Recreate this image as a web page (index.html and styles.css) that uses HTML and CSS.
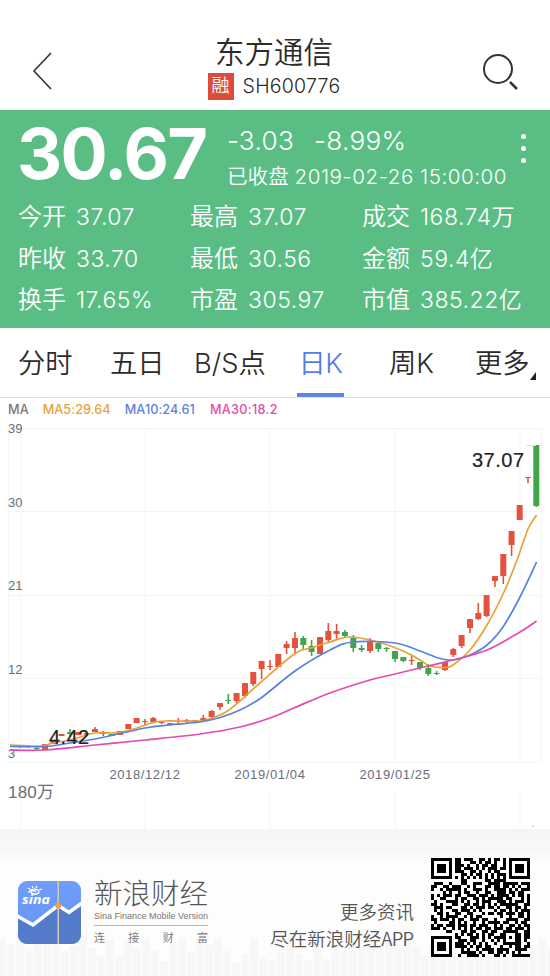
FILE: index.html
```html
<!DOCTYPE html>
<html lang="zh-CN">
<head>
<meta charset="utf-8">
<title>东方通信 SH600776</title>
<link rel="stylesheet" href="styles.css">
</head>
<body>
<header class="topbar">
  <svg class="back" viewBox="0 0 24 40"><path d="M19 2 2 20l17 18"/></svg>
  <div class="heading">
    <h1>东方通信</h1>
    <div class="code"><span class="tag">融</span><span>SH600776</span></div>
  </div>
  <svg class="search" viewBox="0 0 40 40"><circle cx="16" cy="18" r="14"/><path class="handle" d="m28 31 7 7"/></svg>
</header>

<section class="quote">
  <div class="summary">
    <div class="price">30.67</div>
    <div class="change">
      <div class="delta"><span>-3.03</span><span>-8.99%</span></div>
      <div class="status">已收盘 <span>2019-02-26 15:00:00</span></div>
    </div>
    <div class="dots"><i></i><i></i><i></i></div>
  </div>
  <div class="stats">
    <div><b>今开</b>37.07</div><div><b>最高</b>37.07</div><div><b>成交</b>168.74万</div>
    <div><b>昨收</b>33.70</div><div><b>最低</b>30.56</div><div><b>金额</b>59.4亿</div>
    <div><b>换手</b>17.65%</div><div><b>市盈</b>305.97</div><div><b>市值</b>385.22亿</div>
  </div>
</section>

<nav class="tabs">
  <span>分时</span><span>五日</span><span>B/S点</span><span class="active">日K</span><span>周K</span><span class="more">更多</span>
</nav>

<div class="legend"><span>MA</span><span class="ma5">MA5:29.64</span><span class="ma10">MA10:24.61</span><span class="ma30">MA30:18.2</span></div>

<svg class="chart" viewBox="0 420 550 409">
  <path class="grid" d="M8 428.5H541M8 511.5H541M8 595.5H541M8 678.5H541M8 762H541M8.5 428V762M541.5 428V762M20.500 428V762M145 428V762M270 428V762M395 428V762M520 428V762M20.500 792V829M145 792V829M270 792V829M395 792V829M520 792V829"/>
  <g class="axis">
    <text x="8" y="433">39</text><text x="8" y="507">30</text><text x="8" y="590">21</text><text x="8" y="674">12</text><text x="8" y="758">3</text>
    <text x="145" y="779" class="date">2018/12/12</text><text x="270" y="779" class="date">2019/01/04</text><text x="395" y="779" class="date">2019/01/25</text>
    <text x="8" y="798" class="vol">180万</text>
  </g>
  <g id="candles"></g>
  <g id="averages"></g>
  <path class="peak" d="M526 445.500H536"/>
  <text class="mark" x="472" y="467" textLength="52">37.07</text>
  <text class="mark" x="49" y="744" textLength="40">4.42</text>
  <path class="speck" d="M533 825v2"/>
</svg>

<footer class="promo">
  <svg class="skyline" id="skyline" viewBox="0 0 550 76"></svg>
  <svg class="logo" viewBox="0 0 64 64">
    <defs><linearGradient id="sky" x2="0" y2="1"><stop stop-color="#6f9df9"/><stop offset="1" stop-color="#6594f3"/></linearGradient><clipPath id="tile"><rect width="63" height="63" rx="9"/></clipPath></defs>
    <g clip-path="url(#tile)">
      <path fill="url(#sky)" d="M0 0h64v64H0z"/>
      <path fill="#537bca" d="M0 37 15 46 40 25 51 32 64 23V64H0z"/>
      <path fill="none" stroke="#fff" stroke-width="3.500" d="M-1 35 15 44 40 24.500 51 31.500 64 22"/>
      <path stroke="#d9c9b7" stroke-width="1.500" d="M40.200 0V64"/>
      <circle cx="40.200" cy="24.500" r="3" fill="#f49b43"/>
      <g fill="none" stroke="#fff" stroke-width="1.300"><path d="M11 12c0-5 9-5 10-1-1 3-7 3-8 0 1-2 4-2 5 0"/><path d="m12 8-2-1m5 0-1-2m4 2 1-2m2 4 3-1"/></g>
      <text class="sina" x="4" y="22.500" textLength="28" lengthAdjust="spacingAndGlyphs">sina</text>
    </g>
  </svg>
  <div class="brand">
    <div class="name">新浪财经</div>
    <div class="english">Sina Finance Mobile Version</div>
    <div class="slogan"><span>连</span><span>接</span><span>财</span><span>富</span></div>
  </div>
  <div class="invite">更多资讯<br>尽在新浪财经<span>APP</span></div>
  <svg class="qr" viewBox="0 0 33 33" shape-rendering="crispEdges"><path id="modules"/></svg>
</footer>
<script src="chart.js"></script>
</body>
</html>
```
FILE: styles.css
```css
* { box-sizing: border-box; }
body { margin: 0; width: 550px; height: 976px; overflow: hidden; background: #fff; color: #2b2b2b; font-family: Inter, "Noto Sans CJK SC", sans-serif; font-weight: 350; }
svg { display: block; }

.topbar { height: 110px; display: flex; justify-content: space-between; padding: 0 29px 0 32px; }
.back { width: 24px; height: 40px; margin-top: 51px; fill: none; stroke: #333; stroke-width: 1.6; }
.search { width: 40px; height: 40px; margin-top: 51px; margin-right: -1px; fill: none; stroke: #333; stroke-width: 2; }
.search .handle { stroke-width: 2.500; }
.heading { margin-left: 10px; padding-top: 33px; text-align: center; }
h1 { margin: 0; font-size: 29.5px; line-height: 39px; font-weight: 350; }
.code { display: flex; align-items: center; gap: 9px; height: 28px; font-size: 19.500px; letter-spacing: .25px; }
.tag { width: 26px; height: 27px; background: #db4c3b; color: #fff; font-size: 18px; line-height: 26px; }

.quote { height: 218px; background: #5abe84; color: #fff; padding: 0 0 0 18px; }
.summary { height: 86px; display: flex; }
.price { width: 209px; font-size: 70px; line-height: 87px; font-weight: 700; letter-spacing: -1.700px; margin-left: -1px; margin-right: 1px; }
.change { width: 285px; padding-top: 13px; }
.delta { display: flex; gap: 20px; font-size: 26.200px; line-height: 35px; letter-spacing: .3px; }
.status { font-size: 20.6px; line-height: 37px; white-space: nowrap; }
.status span { letter-spacing: .5px; }
.dots { display: flex; flex-direction: column; gap: 7px; padding: 24px 0 0 9px; }
.dots i { width: 5px; height: 5px; border-radius: 50%; background: #fff; }
.stats { display: grid; grid-template-columns: 172px 172px 188px; grid-auto-rows: 41.500px; font-size: 23px; line-height: 42px; letter-spacing: .5px; white-space: nowrap; }
.stats b { font-weight: 350; font-size: 24px; letter-spacing: 0; margin-right: 10px; }

.tabs { height: 70px; display: grid; grid-template: 69px / 92px 84px 103px 92px 86px 57px; border-bottom: 1px solid #dfe1e5; font-size: 27.300px; line-height: 71px; padding-left: 18px; white-space: nowrap; }
.tabs .active { width: 47px; height: 69px; text-align: center; color: #527ee8; border-bottom: 4px solid #5c86e5; letter-spacing: -.5px; }
.tabs .more { position: relative; }
.more::after { content: ""; position: absolute; right: -4px; top: 44px; border-left: 6px solid transparent; border-bottom: 8px solid #222; }

.legend { height: 22px; display: flex; gap: 14px; padding-left: 8px; font: 500 12.700px/23px Inter, sans-serif; letter-spacing: .05px; color: #777; }
.ma5 { color: #e9a238; }
.ma10 { color: #5b82dd; }
.ma30 { color: #e64cab; margin-left: 1px; letter-spacing: .3px; }

.chart { width: 550px; height: 409px; }
.grid { stroke: #f4f4f5; fill: none; }
.axis { fill: #696d7c; font: 13px "Liberation Sans", sans-serif; }
.date { text-anchor: middle; letter-spacing: .6px; }
.vol { font: 17px "Liberation Sans", "Noto Sans CJK SC", sans-serif; letter-spacing: .2px; }
.mark { font: 20px "Liberation Sans", sans-serif; fill: #222; stroke: #222; stroke-width: .2; }
.peak { stroke: #ddd; }
.speck { stroke: #bbb; }
.line { fill: none; stroke-width: 1.700; }

.promo { position: relative; height: 147px; display: flex; background: linear-gradient(#f5f5f5, #f8f8f8 22px, #fdfdfd 32px, #fdfdfd); padding-left: 18px; }
.promo > * { position: relative; }
.promo .skyline { position: absolute; left: 0; bottom: 0; width: 550px; height: 76px; }
.logo { width: 64px; height: 64px; margin-top: 52px; }
.sina { font: italic bold 13px "Open Sans", sans-serif; fill: #fff; }
.brand { width: 114px; margin: 44px 0 0 12px; color: #555; }
.name { font-size: 28.500px; line-height: 42px; font-weight: 300; white-space: nowrap; }
.english { height: 11px; font: 9px/2px "Liberation Sans", sans-serif; white-space: nowrap; color: #777; border-bottom: 1px solid #bbb; }
.slogan { display: flex; justify-content: space-between; font-size: 11px; line-height: 25px; color: #777; }
.invite { width: 170px; margin: 69px 0 0 36px; text-align: right; font: 350 18.500px/27px "Noto Sans CJK SC", sans-serif; color: #555; white-space: nowrap; }
.invite span { letter-spacing: -.8px; margin-right: .8px; }
.qr { width: 99px; height: 99px; margin: 29px 0 0 17px; background: #fff; }
```
FILE: chart.js
```js
// x, wick top, wick bottom, body top, body bottom, rising
const candles = [
  [20,745,748,746,747,0],[28.500,745,748,746,747,0],[36.700,747,750,748,749,0],[45,744,750,744,750,1],[53.300,740,744,740,744,1],[61.600,734,736,734,736,1],[70,729,737,732,734,0],[78.500,732,735,732,735,1],[87,733,736,733,735,1],
  [95,727,732,729,732,1],[103.300,731,736,732,734,1],[111.600,734,736,734,736,0],[120,731,735,731,735,1],[128.300,724,729,724,729,1],[136.600,718,723,718,723,1],[145,719,725,721,722,1],[153.300,717,722,718,722,1],[161.600,721,724,722,723,1],[170,723,725,723,725,1],[178.300,718,725,721,722,1],
  [186.700,719,724,720,722,1],[195,720,722,720,722,1],[203.300,715,721,718,721,1],[211.600,710,718,711,717,1],[220,703,710,703,707,1],[228.300,694,704,700,701,0],[236.600,693,703,693,701,1],[245,683,698,683,696,1],[253.300,672,686,672,684,1],[261.600,661,679,661,669,1],[270,660,670,666,667,1],[278.300,654,667,654,667,1],[286.600,641,654,644,648,1],[295,632,653,638,648,1],[303.300,636,649,638,645,0],[311.600,640,656,646,652,0],[320,637,654,637,654,1],[328.300,623,642,631,640,1],[336.600,624,639,631,634,1],[345,630,637,632,636,0],[353.300,635,652,638,648,0],
  [361.600,645,652,648,650,0],[370,638,653,641,651,1],[378.300,643,652,643,649,0],[386.600,647,652,648,649,0],[395,651,662,651,659,0],[403.300,657,662,657,661,0],[411.600,656,665,660,661,1],[420,662,670,662,668,0],[428.300,664,676,668,674,0],[436.600,671,675,673,674,0],[445,662,671,662,670,1],[453.300,648,657,649,655,1],[461.600,635,648,635,646,1],[470,619,633,619,628,1],[478.300,603,620,613,619,1],[486.600,595,617,595,616,1],[495,576,587,576,581,1],[503.300,554,584,554,576,1],[511.600,531,556,531,545,1],[519.700,505,520,505,520,1],[528,477,483,477,478,1],[536.300,445,507,445,506,0]
];
document.getElementById("candles").innerHTML = candles.map(([x, t, b, o, c, up]) => {
  const color = up ? "#e4513d" : "#43a54a";
  return `<path stroke="${color}" stroke-width="1.600" d="M${x} ${t}V${b}"/><rect x="${x - 3}" y="${o}" width="6" height="${c - o}" rx=".5" fill="${color}"/>`;
}).join("");

const averages = {
  "#eaa035": [[10,745],[40,746],[53,743],[70,740],[95,733],[112,733],[122,732],[137,728],[153,722.500],[165,721],[200,721],[212,718],[226,712],[240,701],[261,682],[295,653.500],[311,648],[330,642],[350,637],[378,642],[403,651],[420,660],[430,666],[445,667.500],[453,665],[470,650],[487,625],[504,592],[517,560],[528,529],[536.600,515]],
  "#5682e2": [[10,746.500],[45,746.500],[70,743],[100,738],[145,728],[170,725],[200,722],[220,717.500],[240,710],[261,698],[295,671],[330,650],[353,642],[395,643],[420,651],[440,658.500],[453,660],[470,655],[487,645],[503,627],[520,597],[536.600,562]],
  "#e64ab0": [[10,750],[45,750],[95,745],[145,740],[200,734],[240,727],[270,718],[295,707.500],[330,693],[370,680],[395,674],[428,666],[453,660],[487,650],[520,632],[536.600,621]]
};
// Catmull-Rom spline through the average points
function curve(p) {
  let d = `M${p[0]}`;
  for (let i = 0; i < p.length - 1; i++) {
    const a = p[i - 1] || p[i], b = p[i], c = p[i + 1], e = p[i + 2] || c;
    d += `C${b[0] + (c[0] - a[0]) / 6} ${b[1] + (c[1] - a[1]) / 6} ${c[0] - (e[0] - b[0]) / 6} ${c[1] - (e[1] - b[1]) / 6} ${c}`;
  }
  return d;
}
document.getElementById("averages").innerHTML = Object.entries(averages).map(([color, p]) => `<path class="line" stroke="${color}" d="${curve(p)}"/>`).join("");

const heights = [36,32,43,25,33,38,39,25,30,41,28,20,36,20,34,28,36,26,15,33,37,24,42,31,37,27,13,22,36,18,15,24,39,22,16,32,17,29,24,33,29,34,30,34,28,38,30,20,33,25,31,35,23,38,30,42,33,37,26,32,36,29,35];
document.getElementById("skyline").innerHTML = heights.map((h, i) => `<rect x="${i * 9 - 2}" y="${76 - h}" width="8" height="${h}" fill="#f7f7f7"/>`).join("");

const rows = [
  "#######.##.###..##.#.##.#.#######",
  "#.....#.##...##.#.##.#..#.#.....#",
  "#.###.#.###.#..#.##.##..#.#.###.#",
  "#.###.#.##.###.#.#.###.##.#.###.#",
  "#.###.#.###..##.#..#.##...#.###.#",
  "#.....#...##.#.##.#.#.###.#.....#",
  "#######.#.#.#.#.#.#.#.#.#.#######",
  "..........##......##.####........",
  ".###..#...##..###..####.#####.###",
  "##..##.###..#.#...##.##.##.#.#..#",
  "#..#.#####.#..###.#..####.#.#.###",
  "....#.#..#.##..#..##..###.##.##..",
  "#.#.###.##..###.###.#.####.#.##.#",
  "#..##...#.##..##.#.#####.##...#.#",
  ".#...####.#.#..#.###..###.#.###.#",
  "##.#...##..##.##.#.#.#.######..##",
  ".###.##...##.#.###.##.#..##.##.#.",
  ".#.#...##.###.#.#....#.##.#.#.###",
  "..##.#..##..##...#.##.##.###.##.#",
  "#..#.####..#.#.##......#..#..##.#",
  "##.###.#.##..###.##..#...####..##",
  ".#....##.#.#..#..#.####.##..#.##.",
  "#.##.###.###.##.###..#.#..##.#.##",
  "###.#..#.#.#.#.##.##.###.##.###.#",
  ".....##...##.##..##.##..#####..##",
  "........#.#.##.#.#.##..##...##.##",
  "#######.##...###.#.#.####.#.##.##",
  "#.....#..###.##..#..#.#.#...##.#.",
  "#.###.#.###.#.#.#.#..#..######..#",
  "#.###.#.####.#.##.##...#..#.##.##",
  "#.###.#...#.#..#.####.####..####.",
  "#.....#...#####.#..##.##.#.#.#...",
  "#######..#..####.#...##.#..######"
];
document.getElementById("modules").setAttribute("d", rows.map((r, y) => [...r].map((c, x) => c === "#" ? `M${x} ${y}h1v1h-1z` : "").join("")).join(""));
```
